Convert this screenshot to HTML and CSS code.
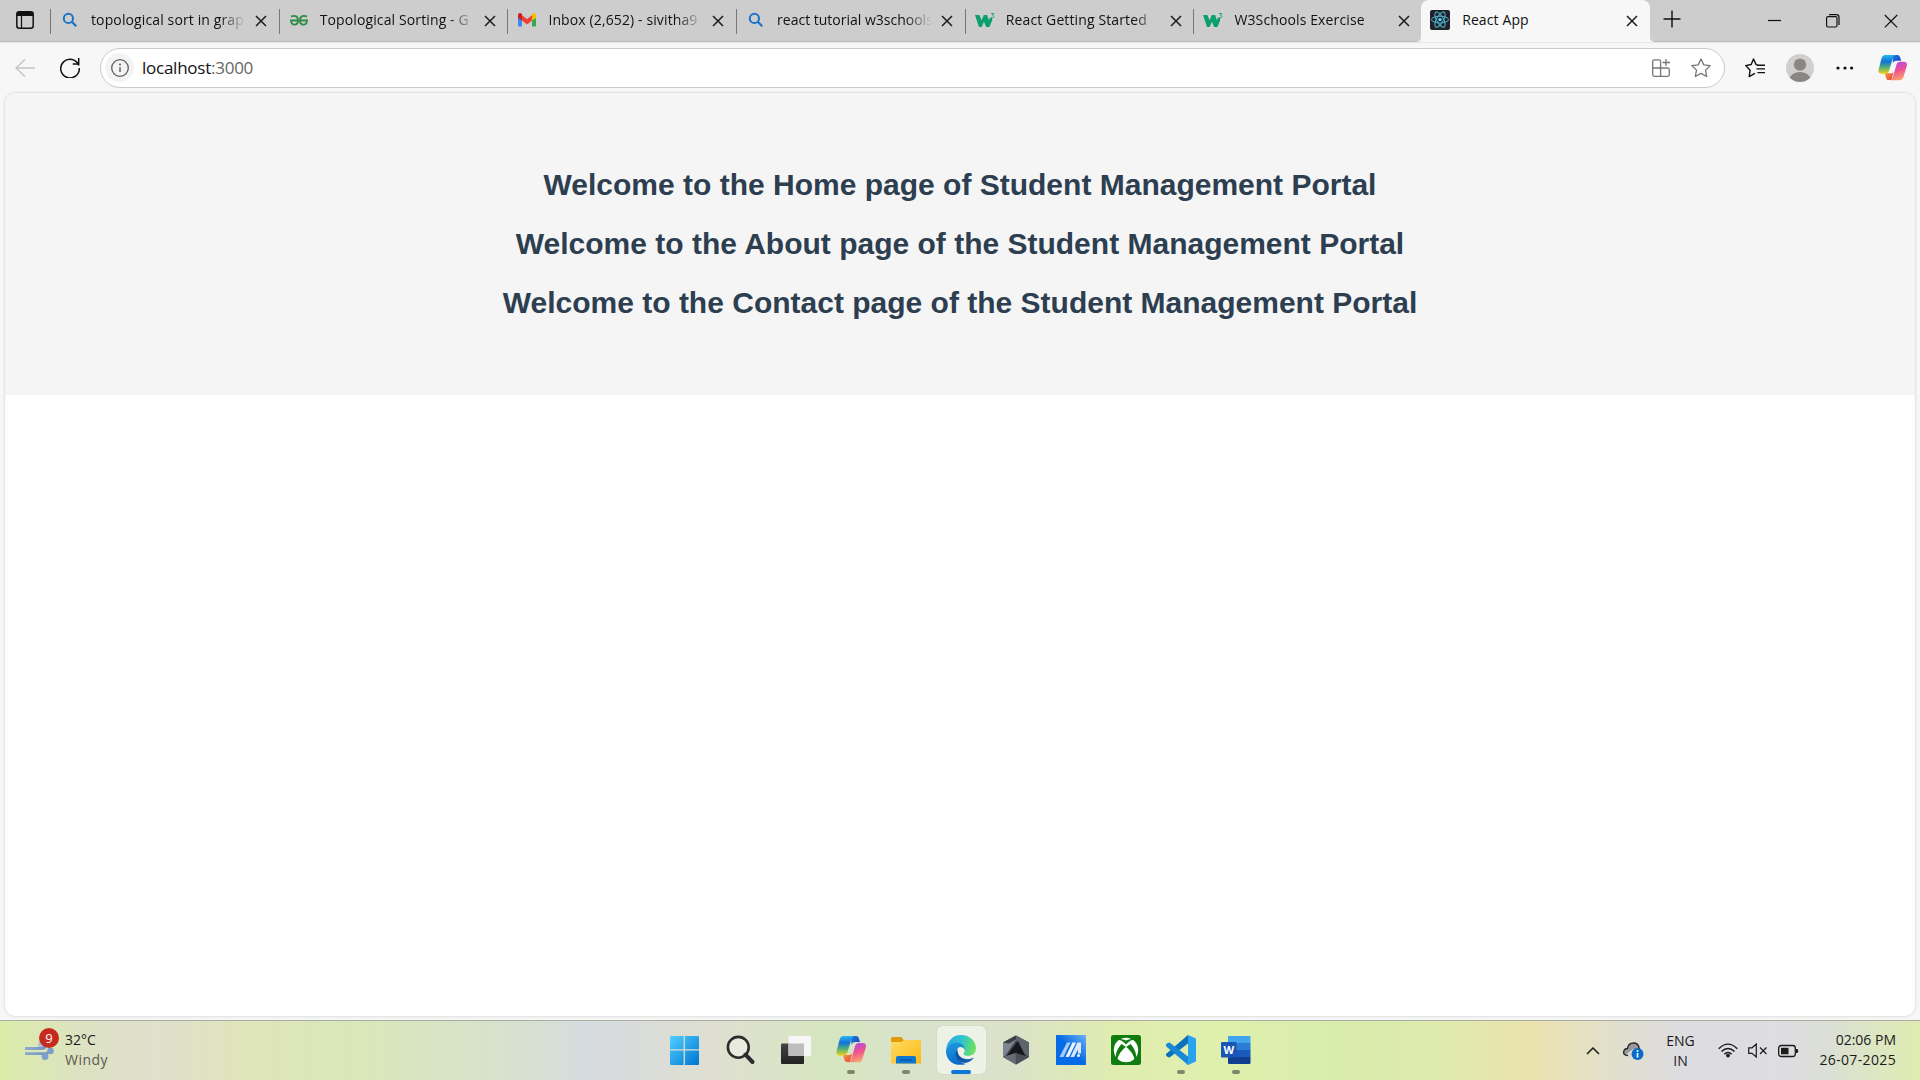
FILE: index.html
```html
<!DOCTYPE html>
<html lang="en">
<head>
<meta charset="utf-8">
<title>React App</title>
<link rel="stylesheet" href="styles.css">
</head>
<body>
<svg class="defs" width="0" height="0" aria-hidden="true">
  <defs>
    <linearGradient id="cpA" x1="0" y1="0" x2="0" y2="1"><stop offset="0" stop-color="#2bb8f0"/><stop offset=".35" stop-color="#1173d8"/><stop offset=".65" stop-color="#4fb07a"/><stop offset="1" stop-color="#f2cf16"/></linearGradient>
    <linearGradient id="cpB" x1=".2" y1="0" x2=".5" y2="1"><stop offset="0" stop-color="#a94bf0"/><stop offset=".5" stop-color="#ee5093"/><stop offset="1" stop-color="#fca36a"/></linearGradient>
    <linearGradient id="cpC" x1="0" y1="0" x2="1" y2="1"><stop offset="0" stop-color="#1c7be0"/><stop offset="1" stop-color="#1a3fbb"/></linearGradient>
    <linearGradient id="cpD" x1="0" y1="0" x2="1" y2="1"><stop offset="0" stop-color="#f9a13a"/><stop offset="1" stop-color="#e8453c"/></linearGradient>
    <linearGradient id="win" x1="0" y1="0" x2="1" y2="1"><stop offset="0" stop-color="#4fd0ff"/><stop offset="1" stop-color="#0074cf"/></linearGradient>
    <linearGradient id="fold" x1="0" y1="0" x2="1" y2="1"><stop offset="0" stop-color="#ffdb63"/><stop offset="1" stop-color="#fcb913"/></linearGradient>
    <linearGradient id="edA" x1="0" y1=".3" x2="1" y2=".5"><stop offset="0" stop-color="#2aa7e6"/><stop offset=".5" stop-color="#2fc3cf"/><stop offset="1" stop-color="#6fe25a"/></linearGradient>
    <linearGradient id="edB" x1="0" y1="0" x2=".3" y2="1"><stop offset="0" stop-color="#1f9be0"/><stop offset="1" stop-color="#0b6ccc"/></linearGradient>
    <linearGradient id="edC" x1="0" y1="0" x2="1" y2="0"><stop offset="0" stop-color="#0f4f9c"/><stop offset="1" stop-color="#1664b4"/></linearGradient>
    <linearGradient id="asus" x1="0" y1="1" x2="1" y2="0"><stop offset=".5" stop-color="#066be6"/><stop offset="1" stop-color="#6fb0f7"/></linearGradient>
    <linearGradient id="tv" x1="0" y1="0" x2="0" y2="1"><stop offset="0" stop-color="#444"/><stop offset="1" stop-color="#222"/></linearGradient>
    <linearGradient id="wind" x1="0" y1="0" x2="1" y2="0"><stop offset="0" stop-color="#8ea9cc"/><stop offset="1" stop-color="#6e93c0"/></linearGradient>
    <symbol id="x" viewBox="0 0 12 12"><path d="M1 1l10 10M11 1L1 11" stroke="#1b1b1b" stroke-width="1.500" fill="none"/></symbol>
    <symbol id="find" viewBox="0 0 20 20"><circle cx="8.400" cy="8.400" r="4.600" fill="none" stroke="#1a73c9" stroke-width="2"/><path d="M11.800 11.800l4.400 4.400" stroke="#1a73c9" stroke-width="2.300"/></symbol>
    <symbol id="w3" viewBox="0 0 20 20"><path d="M0 5h4.400l2.200 5.200L8.800 5h3.400l1.500 5 1.200-2.200h2.200v2.600L14.400 17h-3.200L9 11.800 6.600 17H4z" fill="#0aa06e"/><path d="M16 3.500h2.800l-1.400 1.700c1.900 0 2 2.500.1 2.500-.7 0-1.200-.2-1.500-.6" fill="none" stroke="#0aa06e" stroke-width=".9"/></symbol>
    <symbol id="copilot" viewBox="0 0 30 28">
      <path d="M15 1h5c2 0 2.600 1.500 3.200 3.500L24 7h-5c-2 0-3 1-3.500 3z" fill="url(#cpC)"/>
      <path d="M7 20h6c2 0 3-1 3.500-3L14 27h-3c-1.500 0-2.300-1-2.700-2.500z" fill="url(#cpD)"/>
      <path d="M7.500 1H19c-2 0-3 1.400-3.700 3.600L11.500 17c-.8 2.400-2 3.500-4.500 3.500H4C1 20.500 0 18.700.6 16L3.500 5C4.200 2.300 5.300 1 7.500 1z" fill="url(#cpA)"/>
      <path d="M22.500 27.300H12c2 0 2.800-1.400 3.500-3.600L19 11.300C19.800 8.900 20.800 8 23 8h3.500c3 0 4 1.700 3.300 4.400l-3.300 11c-.8 2.700-2 3.900-4 3.900z" fill="url(#cpB)"/>
    </symbol>
  </defs>
</svg>

<header class="tabstrip">
  <div class="tab-actions"><svg width="18" height="18" viewBox="0 0 18 18"><rect x=".8" y=".8" width="16.400" height="16.400" rx="2.500" fill="none" stroke="#111" stroke-width="1.500"/><path d="M1 5V3Q1 1 3 1h12q2 0 2 2v2z" fill="#111"/><path d="M5.500 5v12" stroke="#111" stroke-width="1.200"/></svg></div>

  <div class="tab"><svg class="fav" viewBox="0 0 20 20"><use href="#find"/></svg><span class="title">topological sort in grap</span><svg class="close"><use href="#x"/></svg></div>
  <div class="tab"><svg class="fav" viewBox="0 0 20 20"><g fill="none" stroke="#2f8d46" stroke-width="1.900"><path d="M2 6.500Q9 4.300 9 10.500 9 14.600 5.600 14.600 2.200 14.600 2 10.500H18Q17.800 14.600 14.400 14.600 11 14.600 11 10.500 11 4.300 18 6.500"/></g></svg><span class="title">Topological Sorting - G</span><svg class="close"><use href="#x"/></svg></div>
  <div class="tab"><svg class="fav" viewBox="0 0 20 20"><path d="M1 6v9.500q0 1 1 1h3V7z" fill="#4285f4"/><path d="M19 6v9.500q0 1-1 1h-3V7z" fill="#34a853"/><path d="M5 5.200l5 3.900 5-3.900v5.300l-5 3.900-5-3.900z" fill="#ea4335"/><path d="M1 8V5q0-2 2-2 .8 0 2 1.200v6.300z" fill="#c5221f"/><path d="M19 8V5q0-2-2-2-.8 0-2 1.200v6.300z" fill="#fbbc04"/></svg><span class="title">Inbox (2,652) - sivitha9</span><svg class="close"><use href="#x"/></svg></div>
  <div class="tab"><svg class="fav" viewBox="0 0 20 20"><use href="#find"/></svg><span class="title tight">react tutorial w3schools</span><svg class="close"><use href="#x"/></svg></div>
  <div class="tab"><svg class="fav" viewBox="0 0 20 20"><use href="#w3"/></svg><span class="title">React Getting Started</span><svg class="close"><use href="#x"/></svg></div>
  <div class="tab"><svg class="fav" viewBox="0 0 20 20"><use href="#w3"/></svg><span class="title">W3Schools Exercise</span><svg class="close"><use href="#x"/></svg></div>
  <div class="tab active"><svg class="fav" viewBox="0 0 20 20"><rect width="20" height="20" rx="2" fill="#20232a"/><circle cx="10" cy="9.600" r="1.700" fill="#61dafb"/><g fill="none" stroke="#4cb4d0" stroke-width="1"><ellipse cx="10" cy="9.600" rx="8.500" ry="3.400"/><ellipse cx="10" cy="9.600" rx="8.500" ry="3.400" transform="rotate(60 10 9.600)"/><ellipse cx="10" cy="9.600" rx="8.500" ry="3.400" transform="rotate(120 10 9.600)"/></g></svg><span class="title">React App</span><svg class="close"><use href="#x"/></svg></div>

  <svg class="newtab" viewBox="0 0 18 18"><path d="M9 .5v17M.5 9h17" stroke="#111" stroke-width="1.400"/></svg>
  <div class="winctl">
    <svg viewBox="0 0 14 14"><path d="M0 6.500h13" stroke="#111" stroke-width="1.200"/></svg>
    <svg viewBox="0 0 14 14"><rect x=".6" y="2.600" width="10.400" height="10.400" rx="1.500" fill="none" stroke="#111" stroke-width="1.200"/><path d="M3 .7h7.500Q13 .7 13 3.200V11" fill="none" stroke="#111" stroke-width="1.200"/></svg>
    <svg viewBox="0 0 14 14"><path d="M.8 1l12.400 12.400M13.200 1L.8 13.400" stroke="#111" stroke-width="1.200"/></svg>
  </div>
</header>

<nav class="toolbar">
  <svg class="back" viewBox="0 0 20 20"><path d="M20 10H1M10 1.200L1 10l9 8.800" fill="none" stroke="#c4c4c4" stroke-width="1.300"/></svg>
  <svg class="reload" viewBox="0 0 20 20"><path d="M18.800 7.500A9.300 9.300 0 1 0 19.300 10" fill="none" stroke="#111" stroke-width="1.500"/><path d="M18.700 0v6h-6" fill="none" stroke="#111" stroke-width="1.500"/></svg>
  <div class="address">
    <span class="info"><svg viewBox="0 0 18 18"><circle cx="9" cy="9" r="8.300" fill="none" stroke="#5c5c5c" stroke-width="1.300"/><path d="M9 8v5" stroke="#5c5c5c" stroke-width="1.400"/><circle cx="9" cy="5.600" r="1" fill="#5c5c5c"/></svg></span>
    <span class="url"><span>localhost</span><span class="port">:3000</span></span>
    <svg class="apps" viewBox="0 0 18 18"><g fill="none" stroke="#767676" stroke-width="1.300"><path d="M8.600 17.300V2.500Q8.600.8 7 .8H2.500Q.7.800.7 2.500V15.500Q.7 17.300 2.500 17.300H15.500Q17.300 17.300 17.300 15.500V10.800Q17.300 9 15.500 9H.7"/><path d="M14 0v7M10.500 3.500h7.500"/></g></svg>
    <svg class="star" viewBox="0 0 20 20"><path d="M10 1l2.800 5.900 6.300.8-4.600 4.400 1.200 6.400L10 15.400l-5.700 3.100 1.200-6.400L.9 7.700l6.300-.8z" fill="none" stroke="#767676" stroke-width="1.300" stroke-linejoin="round"/></svg>
  </div>
  <svg class="favs" viewBox="0 0 20 20"><path d="M11.200 6.900L8.500 1 6.200 6.500.7 7.600l4.400 4.600L4.200 18.600 8.500 16.200l1.500-.8M11.200 6.900l2 .2" fill="none" stroke="#111" stroke-width="1.400" stroke-linejoin="round"/><path d="M12 7.300h8M11.500 10.900H20M12.500 14.600H20" stroke="#111" stroke-width="1.400"/></svg>
  <svg class="avatar" viewBox="0 0 28 28"><clipPath id="av"><circle cx="14" cy="14" r="14"/></clipPath><g clip-path="url(#av)"><rect width="28" height="28" fill="#d2d0ce"/><circle cx="14" cy="10.600" r="6.200" fill="#8a8684"/><ellipse cx="14" cy="25.500" rx="10.500" ry="7.500" fill="#8a8684"/></g></svg>
  <svg class="dots" viewBox="0 0 18 6"><g fill="#111"><circle cx="2" cy="3" r="1.600"/><circle cx="9" cy="3" r="1.600"/><circle cx="15.600" cy="3" r="1.600"/></g></svg>
  <svg class="cp" viewBox="0 0 30 28"><use href="#copilot"/></svg>
</nav>

<div class="frame">
  <main class="page">
    <section class="portal">
      <h2>Welcome to the Home page of Student Management Portal</h2>
      <h2>Welcome to the About page of the Student Management Portal</h2>
      <h2>Welcome to the Contact page of the Student Management Portal</h2>
    </section>
  </main>
</div>

<footer class="taskbar">
  <div class="weather">
    <div class="wicon"><svg viewBox="0 0 30 22"><circle cx="18" cy="5" r="5" fill="#a9c1e2"/><g fill="none" stroke="url(#wind)" stroke-width="2.800"><path d="M0 8.500h16q4 0 4-3M0 13.600h20q5 0 5-4M14 13.600h5"/></g><circle cx="25.500" cy="11" r="3.300" fill="#7f9fca"/><circle cx="20" cy="16.500" r="3.400" fill="#7f9fca"/></svg><b class="badge">9</b></div>
    <div class="wtext"><span class="temp">32°C</span><span class="cond">Windy</span></div>
  </div>
  <div class="apps-row">
    <div class="app start"><svg viewBox="0 0 30 30"><g fill="url(#win)"><path d="M0 2Q0 1 1 1H13.600V14.300H0zM14.900 1H28q1 0 1 1V14.300H14.900zM0 15.600H13.600V30H1q-1 0-1-1zM14.900 15.600H29V29q0 1-1 1H14.900z"/></g></svg></div>
    <div class="app"><svg viewBox="0 0 30 30"><circle cx="12.300" cy="12.300" r="10.400" fill="#ffffff55" stroke="#2c2c2c" stroke-width="2.600"/><path d="M19.500 19.700l7 7.300" stroke="#2c2c2c" stroke-width="4" stroke-linecap="round"/></svg></div>
    <div class="app"><svg viewBox="0 0 30 30"><rect x="0" y="8.500" width="23" height="20.500" rx="1" fill="url(#tv)"/><rect x="7.500" y="1" width="22.500" height="20" rx="1" fill="#f7f7f9"/><rect x="7.500" y="8.500" width="15.500" height="12.500" fill="#bdbdbd"/></svg></div>
    <div class="app run"><svg viewBox="0 0 30 30"><use href="#copilot" width="30" height="28"/></svg></div>
    <div class="app run"><svg viewBox="0 0 30 30"><path d="M0 8V3.500Q0 2 1.500 2h8q1 0 1.600.8L12.500 5H30v3z" fill="#e09b0a"/><path d="M0 7h10.500l2.500-2H30v23.500H0z" fill="url(#fold)"/><path d="M5 28.500V23q0-2 2-2h16q2 0 2 2v5.500z" fill="#1077d0"/><path d="M9 25h12" stroke="#0a54a8" stroke-width="1.400"/></svg></div>
    <div class="app current"><svg viewBox="0 0 30 30"><path d="M0 15C1 6 7 0 15 0c9 0 15 6.500 15 13 0 5-3.500 7.800-8 7.800-2.500 0-4.500-.8-4.500-1.800 0-.8 1.200-1.300 1.200-3.500C18.700 11.500 15 8.500 10 8.500 5 8.500 1.500 11 0 15z" fill="url(#edA)"/><path d="M0 15C1.500 11 5 7.500 10.500 7.500c5 0 8.200 3.500 8.200 7.500-.8-2-2.300-3-4-3-3 0-4.700 2.700-4.700 6 0 5.500 4.500 10.500 10 11C8 32.500-.5 25 0 15z" fill="url(#edB)"/><path d="M11.500 13c-5 8 1 17 10 14.500 3-1 5.500-3.200 6.500-5-3 1.700-6.500 2-9.500 1.300-4.500-1-7.500-4.500-7-10.800z" fill="url(#edC)"/></svg></div>
    <div class="app"><svg viewBox="0 0 30 30"><path d="M15 .5l13 7v14.500l-13 7.500L2 22V7.500z" fill="#43474d"/><path d="M15 .5V5L4.500 20.500 2 22V7.500z" fill="#7d8793"/><path d="M2 7.500l13-7v4L8 8.500z" fill="#3c4046"/><path d="M15 .5l13 7V22l-4-3L15 5z" fill="#5e646c"/><path d="M17 6l7.500 15.500-10-3.500-9 3z" fill="#17191c"/><path d="M2 22l12.500-4 10 3.500L15 29.500z" fill="#686d75"/><path d="M14.500 18L28 22l-13 7.500z" fill="#4b4f56"/></svg></div>
    <div class="app"><svg viewBox="0 0 30 30"><rect width="30" height="30" fill="url(#asus)"/><path d="M3.500 22L11 7.500h3.500L7.500 22z" fill="#a9cbf6"/><path d="M9.500 22L16.500 7.500H20L13 22z" fill="#eef4fd"/><path d="M14.500 22L21.500 7.500H25v11h-3v-4L18 22z" fill="#dbe8fb"/><circle cx="22.500" cy="20.600" r="1.500" fill="#fff"/></svg></div>
    <div class="app"><svg viewBox="0 0 30 30"><rect width="30" height="30" rx="2.500" fill="#107c10"/><circle cx="15" cy="15" r="12.200" fill="#fff"/><path d="M15 9.500C12 6.300 8 4 6.300 5L8 3.700Q15 4.500 15 6 15 4.500 22 3.700L23.700 5C22 4 18 6.300 15 9.500z" fill="#107c10"/><path d="M10.500 9C7 13 3.500 19 5.300 24.300L6.500 25C6.500 20.500 11 15 15 11.800c4 3.200 8.500 8.700 8.500 13.200l1.200-.7C26.500 19 23 13 19.500 9L15 12z" fill="#107c10"/></svg></div>
    <div class="app run"><svg viewBox="0 0 30 30"><path d="M22 0L22 8.500 3.500 22.500 2 22.300 0 20.500V19z" fill="#0a71bd"/><path d="M0 9.500L2 7.800 3.500 7.600 22 21.500V30L0 11.200z" fill="#1789d6"/><path d="M22 0l8 3.500v23L22 30q-1 0-1.500-.8 1.500.5 1.500-1.200V2Q22 .3 20.500.8 21 0 22 0z" fill="#2aa3ee"/></svg></div>
    <div class="app run"><svg viewBox="0 0 30 30"><path d="M7 2q0-1 1-1h20.500q1 0 1 1v6.500H7z" fill="#41a5ee"/><path d="M7 8h22.500v7H7z" fill="#2b7cd3"/><path d="M7 15h22.500v7H7z" fill="#185abd"/><path d="M7 22h22.500v6q0 1-1 1H8q-1 0-1-1z" fill="#103f91"/><rect x="0" y="7" width="15.500" height="15.500" rx="1" fill="#1a56b5"/><text x="7.700" y="18.700" text-anchor="middle" class="wordmark">W</text></svg></div>
  </div>
  <div class="tray">
    <svg class="caret" viewBox="0 0 14 8"><path d="M1 7l6-6 6 6" fill="none" stroke="#1b1b1b" stroke-width="1.500"/></svg>
    <svg class="cloud" viewBox="0 0 21 18"><path d="M5 13.500C1 13.500 0 11 .9 9 1.400 7.300 3 6.600 4.500 6.500 5 3 7.500 1 10.500 1c3 0 5 2 5.500 4.500L17 8" fill="#9a9a9a" stroke="#2a2a2a" stroke-width="1.400"/><path d="M3 12.500L10 7l5 2v4z" fill="#ddd"/><circle cx="14.500" cy="12" r="6" fill="#0a6cc9"/><path d="M14.500 11v4.500" stroke="#fff" stroke-width="1.700"/><circle cx="14.500" cy="8.900" r="1" fill="#fff"/></svg>
    <div class="lang"><span>ENG</span><span>IN</span></div>
    <svg class="wifi" viewBox="0 0 20 15"><g fill="none" stroke="#1b1b1b" stroke-width="1.400"><path d="M.7 5.800Q10-3.600 19.300 5.800M3.500 8.600Q10 2.300 16.500 8.600M6.300 11.300Q10 7.600 13.700 11.300"/></g><circle cx="10" cy="12.600" r="1.900" fill="#1b1b1b"/></svg>
    <svg class="vol" viewBox="0 0 20 15"><path d="M.7 4.800H4L8.300 1v13L4 10.300H.7zM12 4.500l6.500 6.500M18.500 4.500L12 11" fill="none" stroke="#1b1b1b" stroke-width="1.200"/></svg>
    <svg class="bat" viewBox="0 0 21 14"><rect x=".7" y="1.500" width="16.600" height="11" rx="2.500" fill="none" stroke="#1b1b1b" stroke-width="1.300"/><rect x="3" y="3.800" width="7.500" height="6.500" fill="#1b1b1b"/><path d="M18 5h1q1.200 0 1.200 2T19 9h-1z" fill="#1b1b1b"/></svg>
    <div class="clock"><span class="time">02:06 PM</span><span class="date">26-07-2025</span></div>
  </div>
</footer>
</body>
</html>
```
FILE: styles.css
```css
* { box-sizing: border-box; }
body {
  margin: 0;
  width: 1920px;
  height: 1080px;
  overflow: hidden;
  display: flex;
  flex-direction: column;
  background: #f7f7f7;
  color: #1b1b1b;
  font-family: "Open Sans", "Noto Sans", sans-serif;
}
svg { display: block; flex: none; }
.defs { position: absolute; }

.tabstrip {
  height: 42px;
  display: flex;
  background: #cdcdcd;
  box-shadow: inset 0 -1px 0 #bcbcbc;
}
.tab-actions { width: 50px; padding: 11px 0 0 16px; }
.tab {
  width: 228.700px;
  height: 42px;
  padding-left: 10px;
  display: flex;
  align-items: center;
  background: linear-gradient(#777, #777) 0 9px / 1px 25px no-repeat;
}
.fav { width: 20px; height: 20px; margin-right: 11px; margin-top: -2px; }
.title {
  width: 157px;
  margin-top: -3px;
  white-space: nowrap;
  font-size: 14px;
  line-height: 22px;
  letter-spacing: .12px;
  color: #111;
  -webkit-mask-image: linear-gradient(90deg, #000 128px, transparent 155px);
  mask-image: linear-gradient(90deg, #000 128px, transparent 155px);
}
.title.tight { letter-spacing: 0; }
.close { width: 12px; height: 12px; margin-left: 7px; margin-top: -1px; }
.tab.active {
  position: relative;
  width: 229px;
  margin-left: -1px;
  padding-left: 9px;
  background: #f7f7f7;
  border-radius: 8px 8px 0 0;
}
.active::before, .active::after {
  content: "";
  position: absolute;
  bottom: 0;
  width: 4px;
  height: 4px;
}
.active::before { left: -4px; background: radial-gradient(circle at 0 0, #cdcdcd 3.5px, #f7f7f7 4px); }
.active::after { right: -4px; background: radial-gradient(circle at 100% 0, #cdcdcd 3.5px, #f7f7f7 4px); }
.active .title { -webkit-mask-image: none; mask-image: none; margin-left: 1px; }
.newtab { width: 18px; height: 18px; margin: 10px 0 0 13px; }
.winctl { margin-left: auto; display: flex; gap: 44px; padding: 14px 22px 0 0; }
.winctl svg { width: 14px; height: 14px; }

.toolbar { height: 50px; display: flex; align-items: center; border-top: 1px solid #e6e6e6; }
.back { width: 20px; height: 20px; margin-left: 15px; }
.reload { width: 20px; height: 20px; margin-left: 25px; }
.address {
  width: 1625px;
  height: 40px;
  margin-left: 20px;
  padding-left: 4px;
  display: flex;
  align-items: center;
  background: #fff;
  border: 1px solid #c9c9c9;
  border-radius: 20px;
}
.info {
  width: 29px; height: 29px;
  display: flex; align-items: center; justify-content: center;
  background: #f3f3f3;
  border-radius: 50%;
}
.info svg { width: 18px; height: 18px; }
.url { margin-left: 8px; margin-right: auto; font-size: 17px; line-height: 24px; letter-spacing: -.25px; color: #111; }
.port { color: #666; }
.apps { width: 18px; height: 18px; }
.star { width: 20px; height: 20px; margin: 0 13px 0 21px; }
.favs { width: 20px; height: 20px; margin-left: 20px; }
.avatar { width: 28px; height: 28px; margin-left: 21px; }
.dots { width: 18px; height: 6px; margin-left: 22px; }
.cp { width: 29px; height: 27px; margin-left: 24px; }

.frame { height: 928px; padding: 1px 5px 4px; }
.page {
  height: 923px;
  overflow: hidden;
  background: #fff;
  border-radius: 11px;
  box-shadow: 0 0 2px 1px #dfdfdf;
}
.portal { height: 302px; padding-top: 75px; background: #f5f5f5; text-align: center; }
.portal h2 {
  margin: 0 0 25px;
  font: bold 30px/34px "Liberation Sans", Arial, sans-serif;
  color: #2c3e50;
}

.taskbar {
  height: 60px;
  display: grid;
  grid-template-columns: 658.500px 605px 1fr;
  border-top: 1px solid #a9ada0;
  background: linear-gradient(90deg, #dbeca8 0, #dde2c4 86px, #e0e0cc 159px, #dfe5b8 251px, #d9e8b8 355px, #d8e6c0 404px, #d8e0d0 527px, #d6dbe0 588px, #dadcd8 650px, #dfe0d0 722px, #d6e6c0 833px, #d9e2cc 918px, #dce2c8 1016px, #e0ecb0 1114px, #dff0ac 1225px, #d8ecac 1335px, #dfeaae 1445px, #ebe2b0 1537px, #e2e0c8 1604px, #dddce0 1678px, #dddde2 1776px, #dcdfd6 1825px, #dfecb0 1920px);
}
.weather { display: flex; padding-left: 25px; }
.wicon { position: relative; width: 40px; padding-top: 19px; }
.wicon svg { width: 30px; height: 22px; }
.badge {
  position: absolute; left: 14px; top: 7px;
  width: 20px; height: 20px;
  border-radius: 50%;
  background: #c42b1c; color: #fff;
  font-size: 13px; font-weight: 400; line-height: 20px; text-align: center;
}
.wtext, .lang, .clock { display: flex; flex-direction: column; font-size: 14px; line-height: 20px; padding-top: 9px; }
.cond { color: #5a5a50; letter-spacing: .5px; }
.apps-row { display: flex; }
.app {
  position: relative;
  width: 49px; height: 48px;
  margin: 5px 3px 0;
  display: flex; justify-content: center;
  padding-top: 9px;
  border-radius: 5px;
}
.app svg { width: 30px; height: 30px; }
.start { justify-content: flex-start; padding-left: 8px; }
.current { background: #eef1e6; box-shadow: 0 0 1px #aaa; }
.run::after, .current::after {
  content: "";
  position: absolute; bottom: 0; left: 20px;
  width: 8px; height: 4px;
  border-radius: 2px;
  background: #7f866f;
}
.current::after { left: 14px; width: 20px; background: #0a78d4; }
.wordmark { font: bold 11px "Open Sans", sans-serif; fill: #fff; }
.tray { display: flex; align-items: center; padding-right: 24px; }
.caret { width: 14px; height: 8px; margin-left: 322px; }
.cloud { width: 21px; height: 18px; margin-left: 23px; }
.lang { width: 34px; height: 59px; margin-left: 20px; padding-top: 10px; text-align: center; }
.wifi { width: 20px; height: 15px; margin-left: 20px; }
.vol { width: 20px; height: 15px; margin-left: 10px; }
.bat { width: 21px; height: 14px; margin-left: 10px; }
.clock { height: 59px; margin-left: auto; text-align: right; }
.date { letter-spacing: .35px; }
```
